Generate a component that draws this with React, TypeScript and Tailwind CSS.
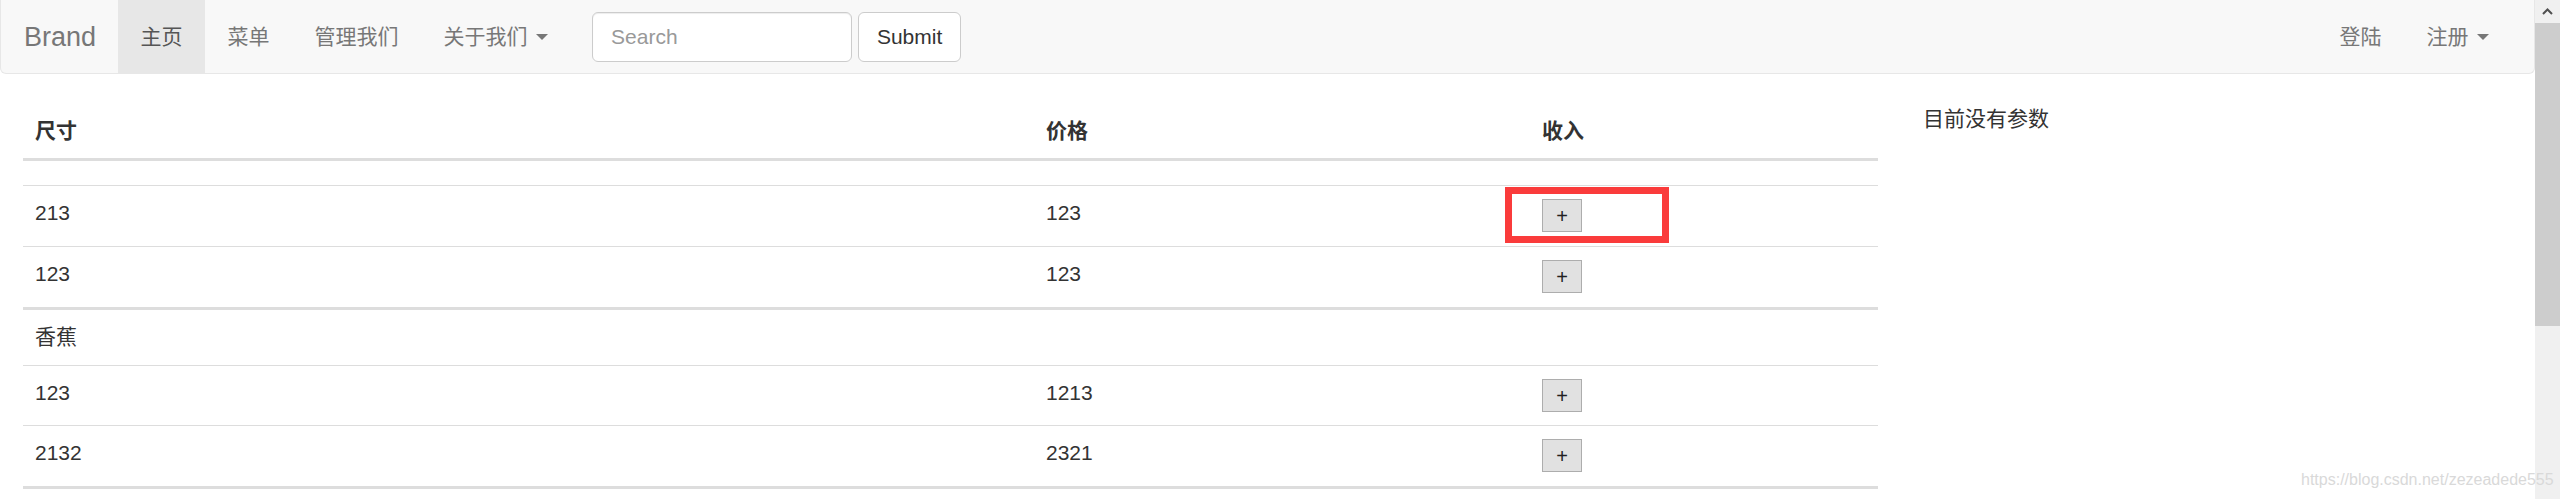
import React from "react";

const rows = [
  { size: "213", price: "123", btn: true, h: "h-[61px]", border: "border-t border-[#ddd]", mark: true },
  { size: "123", price: "123", btn: true, h: "h-[61px]", border: "border-t border-[#ddd]" },
  { size: "香蕉", price: "", btn: false, h: "h-[58px]", border: "border-t-[3px] border-[#ddd]" },
  { size: "123", price: "1213", btn: true, h: "h-[60px]", border: "border-t border-[#ddd]" },
  { size: "2132", price: "2321", btn: true, h: "h-[61px]", border: "border-t border-[#ddd]" },
];

function Caret() {
  return <span className="inline-block w-0 h-0 ml-[8px] border-x-[6px] border-t-[6px] border-x-transparent border-t-[#777] align-middle" />;
}

function NavItem({ label, active, caret }: { label: string; active?: boolean; caret?: boolean }) {
  return (
    <div className={`flex items-center px-[22.5px] leading-[30px] ${active ? "bg-[#e7e7e7] text-[#555]" : "text-[#777]"}`}>
      {label}
      {caret && <Caret />}
    </div>
  );
}

function Navbar() {
  return (
    <nav className="flex justify-between h-[74px] bg-[#f8f8f8] border-x border-b border-[#e7e7e7] rounded-b-[6px] text-[21px]">
      <div className="flex items-stretch">
        <div className="flex items-center pl-[23px] pr-[22px] text-[27px] leading-[30px] text-[#777]">Brand</div>
        <NavItem label="主页" active />
        <NavItem label="菜单" />
        <NavItem label="管理我们" />
        <NavItem label="关于我们" caret />
        <div className="flex items-center gap-[6px] ml-[22px]">
          <input
            readOnly
            placeholder="Search"
            className="w-[260px] h-[50px] px-[18px] bg-white border border-[#ccc] rounded-[6px] text-[21px] text-[#555] placeholder:text-[#999] shadow-[inset_0_1px_1px_rgba(0,0,0,0.075)] outline-none"
          />
          <button className="w-[103px] h-[50px] bg-white border border-[#ccc] rounded-[6px] text-[21px] text-[#333]">Submit</button>
        </div>
      </div>
      <div className="flex items-stretch mr-[23px]">
        <NavItem label="登陆" />
        <NavItem label="注册" caret />
      </div>
    </nav>
  );
}

function PlusButton() {
  return (
    <button className="w-[40px] h-[33px] bg-[#e1e1e1] border border-[#adadad] text-[20px] leading-none text-[#222]">+</button>
  );
}

function DataTable() {
  return (
    <div className="w-[1855px] text-[21px] leading-[30px] text-[#333]">
      <div className="grid grid-cols-[1011px_496px_348px] h-[54px] font-bold">
        <div className="px-[12px] pt-[12px]">尺寸</div>
        <div className="px-[12px] pt-[12px]">价格</div>
        <div className="px-[12px] pt-[12px]">收入</div>
      </div>
      <div className="h-[27px] border-t-[3px] border-[#ddd]" />
      {rows.map((r, i) => (
        <div key={i} className={`grid grid-cols-[1011px_496px_348px] ${r.h} ${r.border}`}>
          <div className="px-[12px] pt-[12px]">{r.size}</div>
          <div className="px-[12px] pt-[12px]">{r.price}</div>
          <div className="relative px-[12px] pt-[13px]">
            {r.btn && <PlusButton />}
            {r.mark && <div className="absolute left-[-25px] top-[1px] w-[164px] h-[56px] border-[7px] border-[#fa3b3b]" />}
          </div>
        </div>
      ))}
      <div className="border-t-[3px] border-[#ddd]" />
    </div>
  );
}

function Scrollbar() {
  return (
    <div className="flex flex-col w-[25px] h-[499px] bg-[#f0f0f0]">
      <div className="flex items-center justify-center h-[23px]">
        <svg width="11" height="7" viewBox="0 0 11 7">
          <polyline points="1,6 5.5,1.5 10,6" fill="none" stroke="#505050" strokeWidth="2" />
        </svg>
      </div>
      <div className="h-[303px] bg-[#cdcdcd]" />
    </div>
  );
}

export default function App() {
  return (
    <div className="relative flex w-[2560px] h-[499px] overflow-hidden bg-white font-['Liberation_Sans','Noto_Sans_CJK_SC',sans-serif]">
      <div className="w-[2535px]">
        <Navbar />
        <div className="flex gap-[45px] mt-[30px] ml-[23px]">
          <DataTable />
          <div className="text-[21px] leading-[30px] text-[#333]">目前没有参数</div>
        </div>
      </div>
      <Scrollbar />
      <div className="absolute left-[2301px] top-[471px] text-[16px] leading-[18px] text-[#d9d9d9]">https://blog.csdn.net/zezeadede555</div>
    </div>
  );
}
